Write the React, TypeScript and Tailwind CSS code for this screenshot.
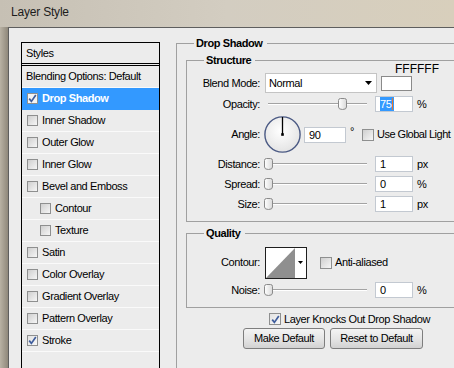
import React from "react";

function Check({ checked = false, small = false, onBlue = false }: { checked?: boolean; small?: boolean; onBlue?: boolean }) {
  return (
    <span
      className={`flex shrink-0 items-center justify-center border border-[#8e8f8f] ${small ? "h-[11px] w-[11px]" : "h-[12px] w-[12px]"} ${onBlue ? "bg-[#f4f4f4]" : checked ? "bg-gradient-to-br from-[#e2e2e2] to-[#f8f8f8]" : "bg-gradient-to-br from-[#cfcfcf] to-[#f6f6f6]"}`}
    >
      {checked && (
        <svg width="9" height="9" viewBox="0 0 9 9">
          <path d="M1.2 4.6 L3.4 7.4 L7.8 1" fill="none" stroke="#3f5d9c" strokeWidth="1.7" />
        </svg>
      )}
    </span>
  );
}

function Slider({ pct }: { pct: number }) {
  const left = 3 + pct * 99 - 4.5;
  return (
    <div className="relative h-[12px] w-[110px] shrink-0">
      <div className="absolute left-[3px] top-[5px] h-[2px] w-[99px] border-t border-[#a3a3a3] bg-white" />
      <svg className="absolute top-0" style={{ left }} width="9" height="12" viewBox="0 0 9 12">
        <defs>
          <linearGradient id="thumbg" x1="0" y1="0" x2="1" y2="0">
            <stop offset="0" stopColor="#ffffff" />
            <stop offset="1" stopColor="#d9d9d9" />
          </linearGradient>
        </defs>
        <path d="M0.5 2.5 Q0.5 0.5 2.5 0.5 H6.5 Q8.5 0.5 8.5 2.5 V9 Q8.5 11.5 4.5 11.5 Q0.5 11.5 0.5 9 Z" fill="url(#thumbg)" stroke="#8a8a8a" />
      </svg>
    </div>
  );
}

function Field({ value, wide = false, selected = false }: { value: string; wide?: boolean; selected?: boolean }) {
  return (
    <div className={`flex h-[16px] shrink-0 items-center border border-[#c3c9d1] bg-white pl-[4px] leading-[14px] ${wide ? "w-[42px]" : "w-[38px]"}`}>
      {selected ? (
        <span className="flex items-center bg-[#3399ff] pr-px text-white">
          {value}
          <span className="ml-px h-[12px] w-px bg-[#e87a2a]" />
        </span>
      ) : (
        <span>{value}</span>
      )}
    </div>
  );
}

function GroupHead({ title }: { title: string }) {
  return (
    <div className="flex h-[12px] shrink-0">
      <div className="mt-[6px] w-[18px] shrink-0 border-l border-t border-[#a0a0a0]" />
      <span className="pl-[2px] pr-[4px] text-[11px] font-bold leading-[12px] text-black">{title}</span>
      <div className="mt-[6px] h-px flex-1 bg-[#a0a0a0]" />
    </div>
  );
}

function Label({ children }: { children: React.ReactNode }) {
  return <span className="w-[73px] shrink-0 text-right">{children}</span>;
}

const items: { name: string; checked?: boolean; indent?: boolean; active?: boolean }[] = [
  { name: "Drop Shadow", checked: true, active: true },
  { name: "Inner Shadow" },
  { name: "Outer Glow" },
  { name: "Inner Glow" },
  { name: "Bevel and Emboss" },
  { name: "Contour", indent: true },
  { name: "Texture", indent: true },
  { name: "Satin" },
  { name: "Color Overlay" },
  { name: "Gradient Overlay" },
  { name: "Pattern Overlay" },
  { name: "Stroke", checked: true },
];

export default function App() {
  return (
    <div className="flex h-[368px] w-[454px] flex-col overflow-hidden bg-[#c9c2b4] font-['Liberation_Sans',Arial,sans-serif] text-[11px] tracking-[-0.4px] text-black">
      {/* title bar */}
      <div className="flex h-[27px] shrink-0 items-start bg-gradient-to-r from-[#c6c0b4] via-[#d3cdc1] to-[#d8cfbc] pl-[11px] pt-[5px]">
        <span className="text-[12px] leading-[14px] tracking-[-0.2px] text-[#1c1c1c]">Layer Style</span>
      </div>
      <div className="flex min-h-0 flex-1">
        <div className="w-[8px] shrink-0 bg-gradient-to-r from-[#b9b2a4] to-[#8f887b]" />
        <div className="flex flex-1 border-l border-t border-[#5e5e5e] bg-[#ececec] pl-[12px] pt-[10px]">
          {/* styles list */}
          <div className="mt-[4px] h-[340px] w-[139px] shrink-0 border border-black bg-[#ececec]">
            <div className="flex h-[21px] items-center border-b border-black pl-[4px]">Styles</div>
            <div className="h-[2px] border-b border-black" />
            <div className="flex h-[22px] items-center border-b border-[#fafafa] pl-[4px]">Blending Options: Default</div>
            {items.map((it) => (
              <div
                key={it.name}
                className={`flex h-[22px] items-center gap-[4px] border-b ${it.active ? "border-[#3399ff] bg-[#3399ff] font-bold text-white" : "border-[#fafafa]"} ${it.indent ? "pl-[18px]" : "pl-[5px]"}`}
              >
                <Check small checked={it.checked} onBlue={it.active} />
                <span>{it.name}</span>
              </div>
            ))}
          </div>

          {/* right side */}
          <div className="-mt-px ml-[16px] flex w-[300px] shrink-0 flex-col">
            <GroupHead title="Drop Shadow" />
            <div className="flex flex-1 flex-col border-l border-[#a0a0a0] pl-[9px]">
              <div className="mt-[5px]">
                <GroupHead title="Structure" />
              </div>
              <div className="flex flex-col border-b border-l border-[#a0a0a0] pb-[7px]">
                <div className="-mt-[2px] h-[9px] pl-[208px] text-[12px] leading-[10px] tracking-normal">FFFFFF</div>
                <div className="flex h-[20px] items-center">
                  <Label>Blend Mode:</Label>
                  <div className="ml-[5px] flex h-[20px] w-[112px] items-center justify-between border border-[#c4c4c4] bg-white pl-[3px] pr-[4px]">
                    <span>Normal</span>
                    <svg width="7" height="4" viewBox="0 0 7 4">
                      <path d="M0 0 H7 L3.5 4 Z" fill="#000" />
                    </svg>
                  </div>
                  <div className="ml-[4px] h-[15px] w-[31px] border border-[#8a8a8a] bg-white" />
                </div>
                <div className="flex h-[22px] items-center">
                  <Label>Opacity:</Label>
                  <div className="ml-[5px]">
                    <Slider pct={0.75} />
                  </div>
                  <Field value="75" selected />
                  <span className="ml-[4px]">%</span>
                </div>
                <div className="flex h-[39px] items-center">
                  <Label>Angle:</Label>
                  <svg className="ml-[4px] shrink-0" width="37" height="37" viewBox="0 0 37 37">
                    <defs>
                      <radialGradient id="dial" cx="0.45" cy="0.4" r="0.6">
                        <stop offset="0" stopColor="#ffffff" />
                        <stop offset="1" stopColor="#e4e4e4" />
                      </radialGradient>
                    </defs>
                    <circle cx="18.5" cy="18.5" r="17.6" fill="url(#dial)" stroke="#4b5a84" strokeWidth="1.4" />
                    <line x1="18.5" y1="18.5" x2="18.5" y2="1" stroke="#000" strokeWidth="1.3" />
                    <rect x="17.2" y="17.2" width="2.6" height="2.6" fill="#000" />
                  </svg>
                  <div className="ml-[3px]">
                    <Field value="90" wide />
                  </div>
                  <span className="ml-[4px] w-[12px] shrink-0 -translate-y-[3px]">°</span>
                  <Check />
                  <span className="ml-[3px] tracking-[-0.5px]">Use Global Light</span>
                </div>
                <div className="flex h-[20px] items-center">
                  <Label>Distance:</Label>
                  <div className="ml-[5px]">
                    <Slider pct={0} />
                  </div>
                  <Field value="1" />
                  <span className="ml-[4px]">px</span>
                </div>
                <div className="flex h-[20px] items-center">
                  <Label>Spread:</Label>
                  <div className="ml-[5px]">
                    <Slider pct={0} />
                  </div>
                  <Field value="0" />
                  <span className="ml-[4px]">%</span>
                </div>
                <div className="flex h-[20px] items-center">
                  <Label>Size:</Label>
                  <div className="ml-[5px]">
                    <Slider pct={0} />
                  </div>
                  <Field value="1" />
                  <span className="ml-[4px]">px</span>
                </div>
              </div>

              <div className="mt-[5px]">
                <GroupHead title="Quality" />
              </div>
              <div className="flex flex-col border-b border-l border-[#a0a0a0] pb-[7px] pt-[8px]">
                <div className="flex h-[31px] items-center">
                  <Label>Contour:</Label>
                  <svg className="ml-[5px] shrink-0" width="42" height="32" viewBox="0 0 42 32">
                    <rect x="0.5" y="0.5" width="41" height="31" fill="#fff" stroke="#1e1e1e" />
                    <path d="M1 31 L30 1 V31 Z" fill="#8f8f8f" />
                    <path d="M33 14 H38 L35.5 17 Z" fill="#000" />
                  </svg>
                  <div className="ml-[13px]">
                    <Check />
                  </div>
                  <span className="ml-[3px]">Anti-aliased</span>
                </div>
                <div className="mt-[2px] flex h-[20px] items-center">
                  <Label>Noise:</Label>
                  <div className="ml-[5px]">
                    <Slider pct={0} />
                  </div>
                  <Field value="0" />
                  <span className="ml-[4px]">%</span>
                </div>
              </div>

              <div className="mt-[5px] flex h-[12px] items-center pl-[83px]">
                <Check checked />
                <span className="ml-[3px]">Layer Knocks Out Drop Shadow</span>
              </div>
              <div className="mt-[3px] flex h-[21px] pl-[57px]">
                <button className="flex h-[21px] w-[82px] items-center justify-center rounded-[3px] border border-[#7e7e7e] bg-gradient-to-b from-[#f4f4f4] via-[#e6e6e6] to-[#d2d2d2] text-black">
                  Make Default
                </button>
                <button className="ml-[5px] flex h-[21px] w-[93px] items-center justify-center rounded-[3px] border border-[#7e7e7e] bg-gradient-to-b from-[#f4f4f4] via-[#e6e6e6] to-[#d2d2d2] text-black">
                  Reset to Default
                </button>
              </div>
            </div>
          </div>
        </div>
      </div>
    </div>
  );
}
